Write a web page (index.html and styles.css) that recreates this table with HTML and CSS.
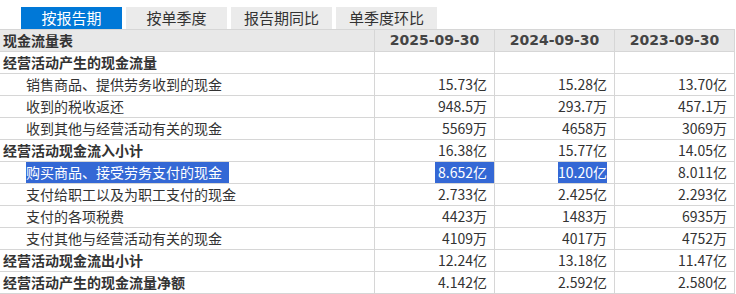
FILE: index.html
```html
<!DOCTYPE html>
<html lang="zh-CN">
<head>
<meta charset="utf-8">
<link rel="stylesheet" href="styles.css">
</head>
<body>
<div class="tabs">
  <div class="tab active">按报告期</div>
  <div class="tab">按单季度</div>
  <div class="tab">报告期同比</div>
  <div class="tab">单季度环比</div>
</div>
<div class="table">
  <div class="row head">
    <div class="cell label bold">现金流量表</div>
    <div class="cell date">2025-09-30</div>
    <div class="cell date">2024-09-30</div>
    <div class="cell date">2023-09-30</div>
  </div>
  <div class="row">
    <div class="cell label bold">经营活动产生的现金流量</div>
    <div class="cell num"></div>
    <div class="cell num"></div>
    <div class="cell num"></div>
  </div>
  <div class="row">
    <div class="cell label sub">销售商品、提供劳务收到的现金</div>
    <div class="cell num">15.73亿</div>
    <div class="cell num">15.28亿</div>
    <div class="cell num">13.70亿</div>
  </div>
  <div class="row">
    <div class="cell label sub">收到的税收返还</div>
    <div class="cell num">948.5万</div>
    <div class="cell num">293.7万</div>
    <div class="cell num">457.1万</div>
  </div>
  <div class="row">
    <div class="cell label sub">收到其他与经营活动有关的现金</div>
    <div class="cell num">5569万</div>
    <div class="cell num">4658万</div>
    <div class="cell num">3069万</div>
  </div>
  <div class="row">
    <div class="cell label bold">经营活动现金流入小计</div>
    <div class="cell num">16.38亿</div>
    <div class="cell num">15.77亿</div>
    <div class="cell num">14.05亿</div>
  </div>
  <div class="row">
    <div class="cell label sub"><span class="sel sel-label">购买商品、接受劳务支付的现金</span></div>
    <div class="cell num flush"><span class="sel sel-num-wide">8.652亿</span></div>
    <div class="cell num"><span class="sel">10.20亿</span></div>
    <div class="cell num">8.011亿</div>
  </div>
  <div class="row">
    <div class="cell label sub">支付给职工以及为职工支付的现金</div>
    <div class="cell num">2.733亿</div>
    <div class="cell num">2.425亿</div>
    <div class="cell num">2.293亿</div>
  </div>
  <div class="row">
    <div class="cell label sub">支付的各项税费</div>
    <div class="cell num">4423万</div>
    <div class="cell num">1483万</div>
    <div class="cell num">6935万</div>
  </div>
  <div class="row">
    <div class="cell label sub">支付其他与经营活动有关的现金</div>
    <div class="cell num">4109万</div>
    <div class="cell num">4017万</div>
    <div class="cell num">4752万</div>
  </div>
  <div class="row">
    <div class="cell label bold">经营活动现金流出小计</div>
    <div class="cell num">12.24亿</div>
    <div class="cell num">13.18亿</div>
    <div class="cell num">11.47亿</div>
  </div>
  <div class="row">
    <div class="cell label bold">经营活动产生的现金流量净额</div>
    <div class="cell num">4.142亿</div>
    <div class="cell num">2.592亿</div>
    <div class="cell num">2.580亿</div>
  </div>
</div>
</body>
</html>
```

FILE: styles.css
```css
html, body {
  margin: 0;
  padding: 0;
  background: #ffffff;
}

body {
  font-family: "Noto Sans CJK SC", "Noto Sans", sans-serif;
  color: #333333;
}

.tabs {
  display: flex;
  gap: 4px;
  padding: 7px 0 0 21px;
  height: 22px;
}

.tab {
  width: 101px;
  height: 22px;
  line-height: 22px;
  text-align: center;
  background: #ebebeb;
  color: #333333;
  font-size: 15px;
}

.tab.active {
  background: #0078d7;
  color: #ffffff;
}

.table {
  width: 735px;
  border-top: 1px solid #d6d6d6;
}

.row {
  display: grid;
  grid-template-columns: 375px 120px 120px 120px;
  height: 22px;
  box-sizing: border-box;
  border-bottom: 1px solid #d6d6d6;
}

.row.head {
  background: #e8e8e8;
}

.cell {
  box-sizing: border-box;
  border-right: 1px solid #d6d6d6;
  height: 21px;
  line-height: 21px;
  font-size: 14px;
  white-space: nowrap;
  overflow: hidden;
}

.label {
  padding-left: 3px;
}

.label.sub {
  padding-left: 26px;
}

.bold {
  font-weight: bold;
  color: #333333;
}

.date {
  text-align: center;
  font-family: "DejaVu Sans", "Noto Sans", sans-serif;
  font-weight: bold;
  font-size: 14px;
  color: #444444;
}

.num {
  text-align: right;
  padding-right: 7px;
}

.num.flush {
  padding-right: 0;
}

.sel {
  display: inline-block;
  height: 21px;
  background: #3468d5;
  color: #ffffff;
  vertical-align: top;
}

.sel-label {
  padding-right: 7px;
}

.sel-num-wide {
  padding-right: 7px;
  padding-left: 3px;
}
```
